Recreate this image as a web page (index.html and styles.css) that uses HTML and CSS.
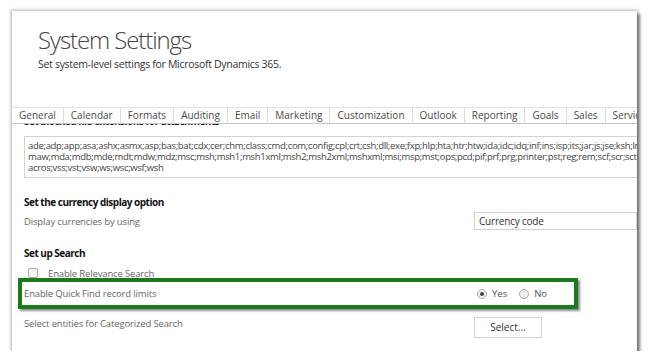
FILE: index.html
```html
<!DOCTYPE html>
<html lang="en">
<head>
  <meta charset="UTF-8">
  <title>System Settings</title>
  <link rel="stylesheet" href="styles.css">
</head>
<body>
  <div class="window">
    <div class="header">
      <h1>System Settings</h1>
      <p class="subtitle">Set system-level settings for Microsoft Dynamics 365.</p>
    </div>
    <div class="tabs">
      <div class="tab active">General</div>
      <div class="tab">Calendar</div>
      <div class="tab">Formats</div>
      <div class="tab">Auditing</div>
      <div class="tab">Email</div>
      <div class="tab">Marketing</div>
      <div class="tab">Customization</div>
      <div class="tab">Outlook</div>
      <div class="tab">Reporting</div>
      <div class="tab">Goals</div>
      <div class="tab">Sales</div>
      <div class="tab">Service</div>
    </div>
    <div class="panel">
      <h2 class="section_title first">Set blocked file extensions for attachments</h2>
      <div class="ext_box">
        <div class="ext_line">ade;adp;app;asa;ashx;asmx;asp;bas;bat;cdx;cer;chm;class;cmd;com;config;cpl;crt;csh;dll;exe;fxp;hlp;hta;htr;htw;ida;idc;idq;inf;ins;isp;its;jar;js;jse;ksh;lnk;mad;maf;mag;mam;maq;mar;mas;mat;mau;mav</div>
        <div class="ext_line">maw;mda;mdb;mde;mdt;mdw;mdz;msc;msh;msh1;msh1xml;msh2;msh2xml;mshxml;msi;msp;mst;ops;pcd;pif;prf;prg;printer;pst;reg;rem;scf;scr;sct;shb;shs;url;vb;vbe;vbs;vsmacros</div>
        <div class="ext_line">acros;vss;vst;vsw;ws;wsc;wsf;wsh</div>
      </div>

      <h2 class="section_title">Set the currency display option</h2>
      <div class="row">
        <div class="label">Display currencies by using</div>
        <div class="select_box">Currency code</div>
      </div>

      <h2 class="section_title">Set up Search</h2>
      <div class="check_row">
        <span class="checkbox"></span>
        <span class="label">Enable Relevance Search</span>
      </div>
      <div class="row highlight">
        <div class="label">Enable Quick Find record limits</div>
        <div class="radios">
          <span class="radio checked"></span><span class="radio_text">Yes</span>
          <span class="radio"></span><span class="radio_text">No</span>
        </div>
      </div>
      <div class="row last">
        <div class="label">Select entities for Categorized Search</div>
        <div class="btn">Select...</div>
      </div>
    </div>
  </div>
</body>
</html>
```

FILE: styles.css
```css
body {
	margin: 0;
	background-color: white;
	font-family: "Open Sans", "Liberation Sans", sans-serif;
}

.window {
	margin: 11px 0 0 12px;
	width: 625px;
	height: 340px;
	background-color: white;
	overflow: hidden;
	box-shadow: 3px 3px 3px rgb(0 0 0 / 45%), 0 0 3px 1px rgb(0 0 0 / 30%);
}

.header {
	padding: 14px 0 0 26px;
	height: 82px;
}

.header h1 {
	margin: 0;
	font-size: 24px;
	font-weight: 300;
	color: #444;
	line-height: 30px;
	letter-spacing: -1.1px;
}

.subtitle {
	margin: 2px 0 0;
	font-size: 10.5px;
	color: #333;
	letter-spacing: -0.3px;
}

.tabs {
	display: flex;
	border-top: 1px solid #e2e2e2;
	border-bottom: 1px solid #c8c8c8;
	height: 15px;
	white-space: nowrap;
}

.tab {
	flex: none;
	padding: 0 7px;
	font-size: 10px;
	line-height: 15px;
	color: #4a4a4a;
	border-right: 1px solid #dcdcdc;
}

.panel {
	padding: 0 0 0 12px;
	height: 228px;
	overflow: hidden;
}

.section_title {
	margin: 0;
	font-size: 10px;
	font-weight: bold;
	color: #111;
	line-height: 14px;
	letter-spacing: -0.5px;
}

.section_title.first {
	margin-top: -10px;
}

.ext_box {
	margin-top: 8px;
	width: 660px;
	height: 42px;
	box-sizing: border-box;
	border: 1px solid #d2d2d2;
	padding: 3px 0 0 3px;
	font-size: 9.5px;
	line-height: 11px;
	color: #444;
	letter-spacing: -0.32px;
}

.ext_line {
	white-space: nowrap;
}

.ext_box + .section_title {
	margin-top: 17px;
}

.row {
	display: flex;
	align-items: center;
}

.section_title + .row {
	margin-top: 3px;
}

.label {
	font-size: 9.5px;
	color: #666;
	letter-spacing: -0.15px;
}

.row .label {
	width: 450px;
	flex: none;
}

.select_box {
	width: 200px;
	height: 16px;
	border: 1px solid #d2d2d2;
	font-size: 10px;
	line-height: 16px;
	padding-left: 4px;
	color: #333;
	letter-spacing: -0.2px;
}

.row + .section_title {
	margin-top: 16px;
}

.check_row {
	display: flex;
	align-items: center;
	margin-top: 6px;
	height: 14px;
	padding-left: 4px;
}

.checkbox {
	width: 8px;
	height: 8px;
	border: 1px solid #aaa;
	border-radius: 2px;
	background-color: #f4f4f4;
	margin-right: 10px;
}

.highlight {
	position: relative;
	margin: -2px 0 0 -6px;
	width: 550px;
	height: 23px;
	border: 4px solid #1b7a1b;
	background-color: white;
	box-shadow: 2px 2px 2px rgb(0 0 0 / 45%);
	padding-left: 2px;
}

.highlight .label {
	width: 453px;
}

.radios {
	display: flex;
	align-items: center;
}

.radio {
	width: 8px;
	height: 8px;
	border: 1px solid #aaa;
	border-radius: 50%;
	background-color: #f0f0f0;
	position: relative;
}

.radio.checked::after {
	content: "";
	position: absolute;
	left: 2px;
	top: 2px;
	width: 4px;
	height: 4px;
	border-radius: 50%;
	background-color: #444;
}

.radio_text {
	font-size: 9.5px;
	color: #555;
	margin: 0 12px 0 5px;
}

.last {
	margin-top: 8px;
	align-items: flex-start;
}

.last .label {
	line-height: 13px;
}

.btn {
	width: 66px;
	height: 19px;
	border: 1px solid #d2d2d2;
	text-align: center;
	font-size: 10px;
	line-height: 19px;
	color: #333;
}
```
